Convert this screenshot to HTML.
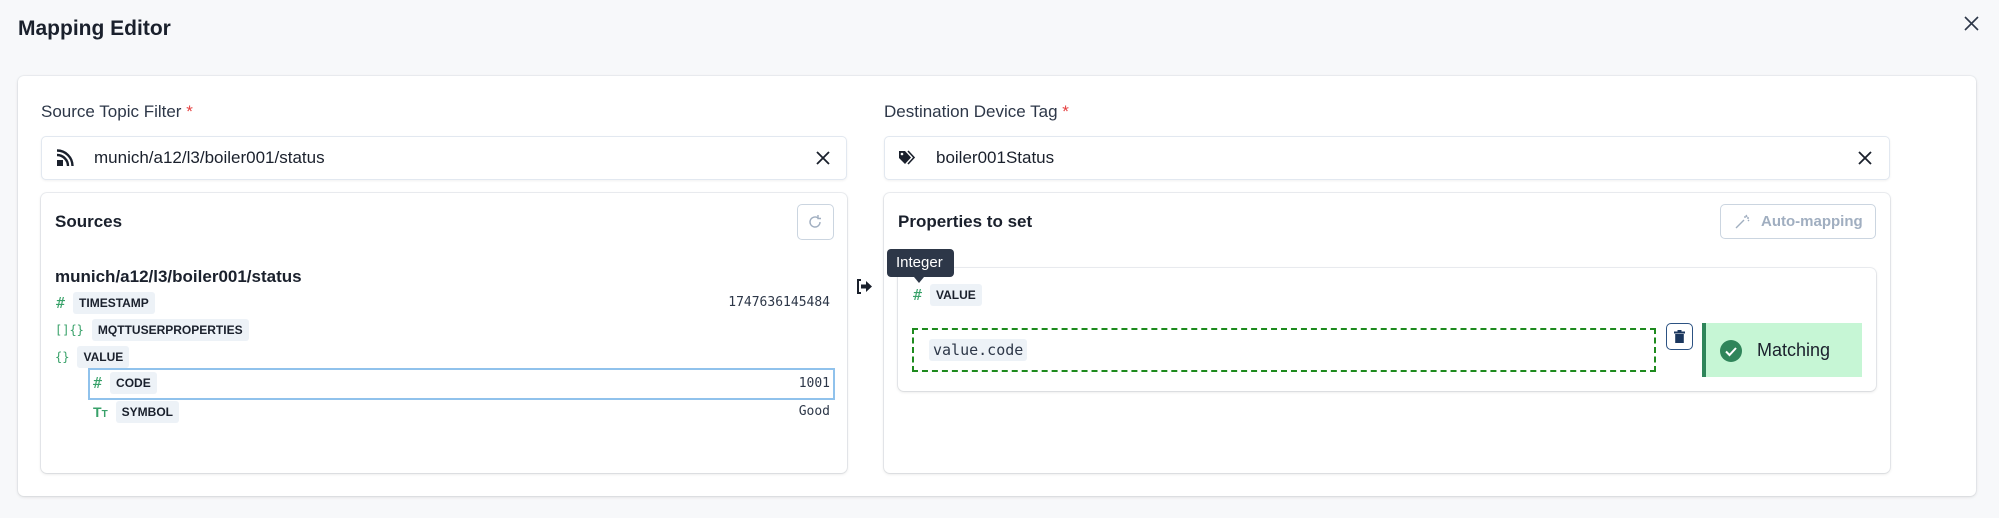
<!DOCTYPE html>
<html><head><meta charset="utf-8"><style>
*{box-sizing:border-box;margin:0;padding:0}
body{width:1999px;height:518px;background:#f7f8fa;font-family:"Liberation Sans",sans-serif;color:#1a202c;position:relative;overflow:hidden}
.a{position:absolute}
.card{background:#fff;border-radius:6px;box-shadow:0 1px 3px rgba(0,0,0,.12),0 0 0 1px #eef0f3}
.lbl{font-size:17px;color:#2d3748}
.lbl b{color:#e53e3e;font-weight:normal}
.inp{background:#fff;border:1px solid #e2e8f0;border-radius:5px;box-shadow:0 1px 2px rgba(0,0,0,.06)}
.tag{display:inline-block;background:#edf2f7;font-weight:bold;font-size:12px;padding:4px 6px;border-radius:3px;color:#1a202c}
.ic{color:#38a169;font-family:"DejaVu Sans Mono",monospace;font-size:15px}
.mono{font-family:"DejaVu Sans Mono","Liberation Mono",monospace;font-size:13px;color:#2d3748}
.row{position:absolute;display:flex;align-items:center;gap:8px}
</style></head><body>
<div class="a" style="left:18px;top:17px;font-size:21px;font-weight:bold">Mapping Editor</div>
<svg class="a" style="left:1964px;top:16px" width="15" height="15" viewBox="0 0 15 15"><path d="M1 1L14 14M14 1L1 14" stroke="#2d3748" stroke-width="1.6"/></svg>

<div class="a card" style="left:18px;top:76px;width:1958px;height:420px"></div>

<div class="a lbl" style="left:41px;top:102px">Source Topic Filter <b>*</b></div>
<div class="a inp" style="left:41px;top:136px;width:806px;height:44px"></div>
<svg class="a" style="left:56px;top:149px" width="18" height="18" viewBox="0 0 18 18"><rect x="1" y="11" width="6" height="6" fill="#1a202c"/><path d="M1 6A11 11 0 0 1 12 17M1 1.5A15.5 15.5 0 0 1 16.5 17" stroke="#1a202c" stroke-width="2.4" fill="none"/></svg>
<div class="a" style="left:94px;top:148px;font-size:17px;color:#1a202c">munich/a12/l3/boiler001/status</div>
<svg class="a" style="left:816px;top:151px" width="14" height="14" viewBox="0 0 14 14"><path d="M1 1L13 13M13 1L1 13" stroke="#1a202c" stroke-width="1.8"/></svg>

<div class="a card" style="left:41px;top:193px;width:806px;height:280px"></div>
<div class="a" style="left:55px;top:212px;font-size:17px;font-weight:bold">Sources</div>
<div class="a" style="left:797px;top:204px;width:37px;height:36px;border:1px solid #cbd5e0;border-radius:5px"></div>
<svg class="a" style="left:807px;top:214px" width="16" height="16" viewBox="0 0 16 16"><path d="M13 8A5 5 0 1 1 11 4M11 1V4.5H14" stroke="#a0aec0" stroke-width="1.4" fill="none"/></svg>
<div class="a" style="left:55px;top:267px;font-size:17px;font-weight:bold">munich/a12/l3/boiler001/status</div>
<div class="row" style="left:56px;top:292px"><span class="ic">#</span><span class="tag">TIMESTAMP</span></div>
<div class="a mono" style="left:720px;top:295px;width:110px;text-align:right">1747636145484</div>
<div class="row" style="left:55px;top:319px"><span class="ic" style="font-size:12px">[]{}</span><span class="tag">MQTTUSERPROPERTIES</span></div>
<div class="row" style="left:55px;top:346px"><span class="ic" style="font-size:12px">{}</span><span class="tag">VALUE</span></div>
<div class="a" style="left:88px;top:368px;width:747px;height:32px;border:2px solid #90c2ec"></div>
<div class="row" style="left:93px;top:372px"><span class="ic">#</span><span class="tag">CODE</span></div>
<div class="a mono" style="left:720px;top:376px;width:110px;text-align:right">1001</div>
<div class="row" style="left:93px;top:401px"><span class="ic" style="font-family:'Liberation Sans';font-weight:bold;font-size:14px">T<span style="font-size:10px">T</span></span><span class="tag">SYMBOL</span></div>
<div class="a mono" style="left:720px;top:404px;width:110px;text-align:right">Good</div>

<svg class="a" style="left:856px;top:279px" width="17" height="15" viewBox="0 0 17 15"><path d="M5 1H2V14H5" stroke="#1a202c" stroke-width="2" fill="none"/><path d="M5 5.5H10V2L16 7.5L10 13V9.5H5Z" fill="#1a202c"/></svg>

<div class="a lbl" style="left:884px;top:102px">Destination Device Tag <b>*</b></div>
<div class="a inp" style="left:884px;top:136px;width:1006px;height:44px"></div>
<svg class="a" style="left:898px;top:150px" width="18" height="16" viewBox="0 0 18 16"><path d="M1 1H7L13 7.5L7 14L1 8Z" fill="#1a202c"/><circle cx="4" cy="4" r="1.3" fill="#fff"/><path d="M10 1L16 7.5L10 14" stroke="#1a202c" stroke-width="1.6" fill="none"/></svg>
<div class="a" style="left:936px;top:148px;font-size:17px">boiler001Status</div>
<svg class="a" style="left:1858px;top:151px" width="14" height="14" viewBox="0 0 14 14"><path d="M1 1L13 13M13 1L1 13" stroke="#1a202c" stroke-width="1.8"/></svg>

<div class="a card" style="left:884px;top:193px;width:1006px;height:280px"></div>
<div class="a" style="left:898px;top:212px;font-size:17px;font-weight:bold">Properties to set</div>
<div class="a" style="left:1720px;top:204px;width:156px;height:35px;border:1px solid #cbd5e0;border-radius:5px;color:#a0aec0;font-weight:bold;font-size:15px;padding:8px 0 0 40px">Auto-mapping</div>
<svg class="a" style="left:1734px;top:214px" width="16" height="16" viewBox="0 0 16 16"><path d="M2 14L10 6M11 2V4M13 4H15M12 1L13 3M14 6L15 7" stroke="#a0aec0" stroke-width="1.4"/></svg>

<div class="a card" style="left:898px;top:268px;width:978px;height:123px"></div>
<div class="a" style="left:887px;top:249px;width:67px;height:28px;background:#2d3748;border-radius:4px;color:#fff;font-size:15px;padding:5px 0 0 9px">Integer</div>
<div class="a" style="left:914px;top:277px;width:0;height:0;border-left:5px solid transparent;border-right:5px solid transparent;border-top:6px solid #2d3748"></div>
<div class="row" style="left:913px;top:284px"><span class="ic">#</span><span class="tag">VALUE</span></div>
<div class="a" style="left:912px;top:328px;width:744px;height:44px;border:2px dashed #1e8a1e"></div>
<div class="a mono" style="left:929px;top:339px;background:#edf2f7;padding:2px 4px;font-size:15px;border-radius:3px">value.code</div>
<div class="a" style="left:1666px;top:323px;width:27px;height:27px;border:1.5px solid #2c5282;border-radius:5px"></div>
<svg class="a" style="left:1674px;top:330px" width="11" height="13" viewBox="0 0 11 13"><rect x="0" y="1.5" width="11" height="2" fill="#1a365d"/><rect x="3.5" y="0" width="4" height="2" fill="#1a365d"/><rect x="1.2" y="4" width="8.6" height="9" fill="#1a365d"/></svg>
<div class="a" style="left:1702px;top:323px;width:160px;height:54px;background:#c6f6d5;border-left:4px solid #2f855a"></div>
<svg class="a" style="left:1719px;top:339px" width="24" height="24" viewBox="0 0 24 24"><circle cx="12" cy="12" r="11" fill="#2f855a"/><path d="M7 12.5L10.5 16L17 9" stroke="#fff" stroke-width="2" fill="none"/></svg>
<div class="a" style="left:1757px;top:340px;font-size:18px;color:#1a202c">Matching</div>
</body></html>
